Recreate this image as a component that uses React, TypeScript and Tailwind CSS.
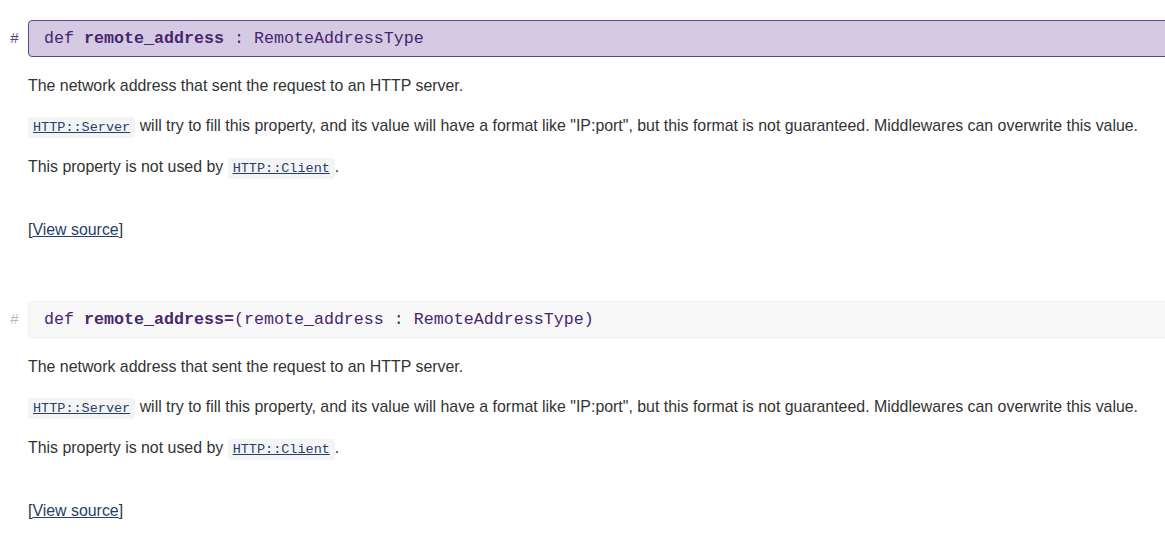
import React from 'react'

const mono = "font-['Liberation_Mono',monospace]"

function Code({ children }: { children: React.ReactNode }) {
  return (
    <a className={`${mono} text-[13.5px] text-[#263f6c] underline bg-[rgba(40,35,30,0.05)] rounded-[3px] px-[5px] py-[3px]`}>
      {children}
    </a>
  )
}

function Entry({ target, name, args }: { target?: boolean; name: string; args?: string }) {
  return (
    <div className="relative pb-[62px]">
      <div
        className={`${mono} relative w-[1200px] h-[37px] flex items-center pl-[15px] text-[16.67px] text-[#47266e] rounded-[4px] border ${
          target ? 'bg-[#d5cae3] border-[#624288]' : 'bg-[#f8f8f8] border-[#efefef]'
        }`}
      >
        <span className={`absolute left-[-19px] top-[8px] text-[15px] ${target ? 'text-[#624288]' : 'text-[#bbbbbb]'}`}>#</span>
        <span className="whitespace-pre">
          def <b>{name}</b>
          {args ?? ' : RemoteAddressType'}
        </span>
      </div>
      <div className="text-[15.9px] text-[#333] font-['Liberation_Sans',Arial,sans-serif]">
        <p className="mt-[20px] leading-[18px]">The network address that sent the request to an HTTP server.</p>
        <p className="mt-[22px] leading-[18px]">
          <Code>HTTP::Server</Code> will try to fill this property, and its value will have a format like "IP:port", but
          this format is not guaranteed. Middlewares can overwrite this value.
        </p>
        <p className="mt-[21px] leading-[18px]">
          This property is not used by <Code>HTTP::Client</Code>.
        </p>
        <p className="mt-[43px] leading-[18px]">
          [<a className="text-[#263f6c] underline">View source</a>]
        </p>
      </div>
    </div>
  )
}

export default function App() {
  return (
    <div className="w-[1165px] h-[541px] overflow-hidden bg-white pl-[28px] pt-[20px]">
      <Entry target name="remote_address" />
      <Entry name="remote_address=" args="(remote_address : RemoteAddressType)" />
    </div>
  )
}
